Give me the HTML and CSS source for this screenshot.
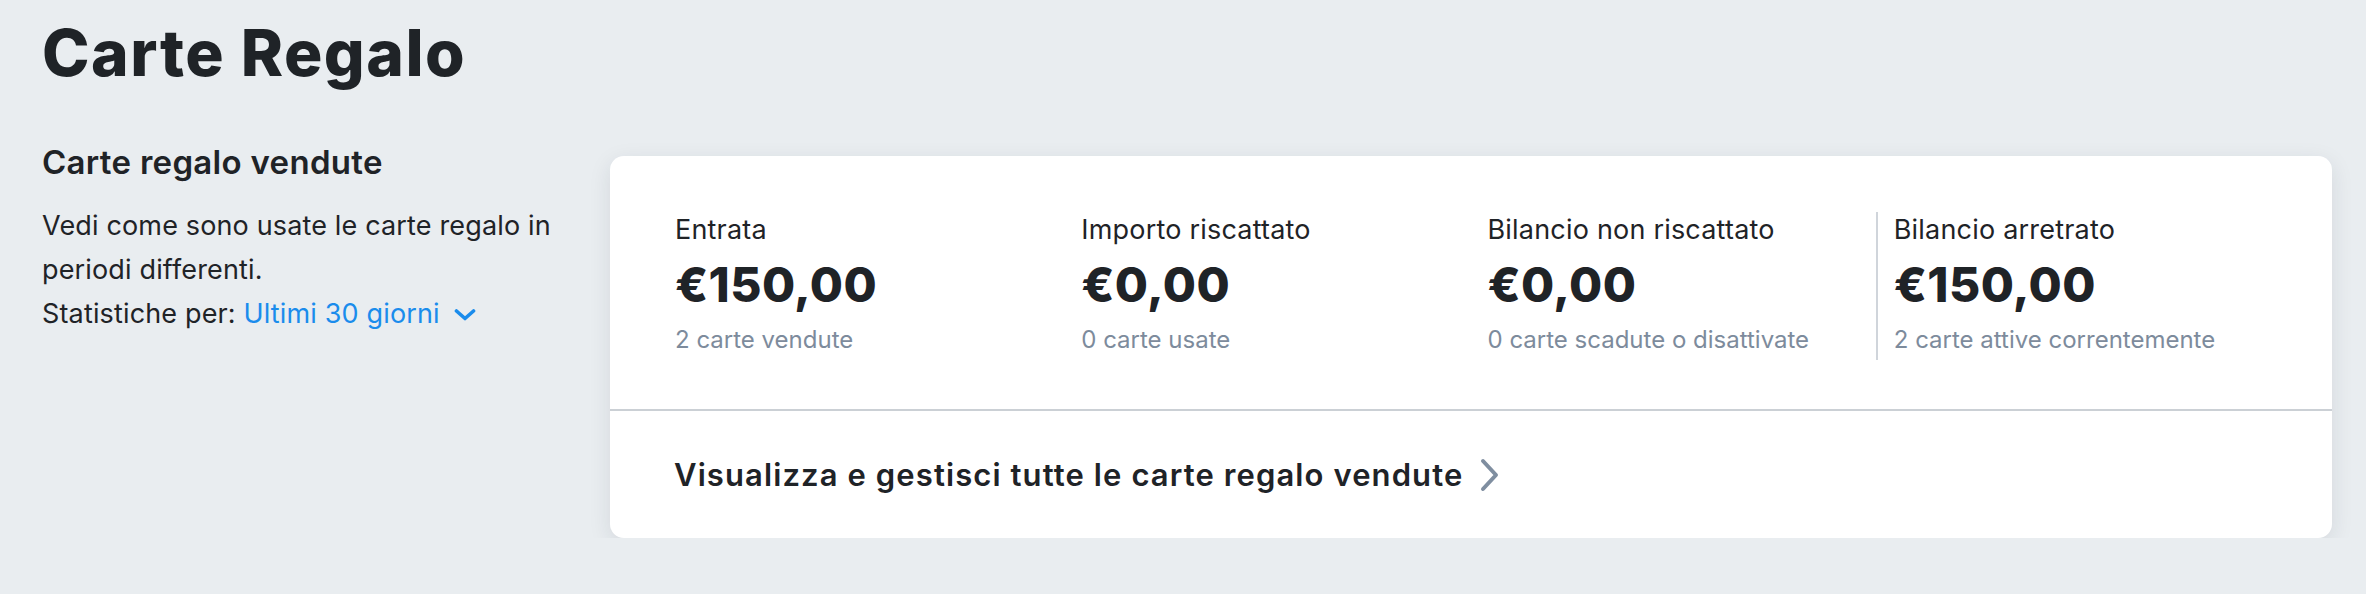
FILE: index.html
```html
<!DOCTYPE html>
<html lang="it">
<head>
    <meta charset="UTF-8">
    <meta name="viewport" content="width=device-width, initial-scale=1.0">
    <title>Carte Regalo</title>
    <link rel="stylesheet" href="styles.css">
</head>
<body>
    <div class="page">
        <h1>Carte Regalo</h1>

        <div class="section">
            <div class="intro">
                <h2>Carte regalo vendute</h2>
                <p>Vedi come sono usate le carte regalo in periodi differenti.</p>
                <div class="period">
                    Statistiche per:
                    <a href="#" class="period-link">Ultimi 30 giorni
                        <svg class="caret" width="22" height="12" viewBox="0 0 22 12">
                            <path d="M2.5 2 L11 9.5 L19.5 2" fill="none" stroke="currentColor" stroke-width="3.6" stroke-linecap="round" stroke-linejoin="round"/>
                        </svg>
                    </a>
                </div>
            </div>

            <div class="card">
                <div class="stats">
                    <div class="stat">
                        <div class="stat-label">Entrata</div>
                        <div class="stat-value">€150,00</div>
                        <div class="stat-note">2 carte vendute</div>
                    </div>
                    <div class="stat">
                        <div class="stat-label">Importo riscattato</div>
                        <div class="stat-value">€0,00</div>
                        <div class="stat-note">0 carte usate</div>
                    </div>
                    <div class="stat">
                        <div class="stat-label">Bilancio non riscattato</div>
                        <div class="stat-value">€0,00</div>
                        <div class="stat-note">0 carte scadute o disattivate</div>
                    </div>
                    <div class="stat stat-outstanding">
                        <div class="stat-label">Bilancio arretrato</div>
                        <div class="stat-value">€150,00</div>
                        <div class="stat-note">2 carte attive correntemente</div>
                    </div>
                </div>

                <a href="#" class="card-footer">
                    Visualizza e gestisci tutte le carte regalo vendute
                    <svg class="chevron" width="20" height="34" viewBox="0 0 20 34">
                        <path d="M3 3 L16 17 L3 31" fill="none" stroke="currentColor" stroke-width="4" stroke-linecap="round" stroke-linejoin="round"/>
                    </svg>
                </a>
            </div>
        </div>
    </div>
</body>
</html>
```

FILE: styles.css
```css
body {
    margin: 0;
    padding: 0;
    background-color: #e9edf0;
    color: #1f2327;
    font-family: Inter, "Noto Sans", sans-serif;
}
a {
    text-decoration: none;
}
.page {
    padding: 14px 34px 0 42px;
}
h1 {
    margin: 0;
    font-size: 64px;
    line-height: 77px;
    font-weight: 800;
    letter-spacing: 1.5px;
}
.section {
    display: flex;
    align-items: flex-start;
    gap: 48px;
    margin-top: 51px;
}
.intro {
    width: 520px;
    flex-shrink: 0;
}
h2 {
    margin: 0;
    font-size: 33px;
    line-height: 40px;
    font-weight: 600;
    letter-spacing: 0.3px;
}
.intro p {
    margin: 22px 0 0;
    font-size: 27px;
    line-height: 44px;
    letter-spacing: 0.15px;
}
.period {
    font-size: 27px;
    line-height: 44px;
    letter-spacing: 0.15px;
}
.period-link {
    color: #1a8cec;
}
.caret {
    margin-left: 6px;
    vertical-align: 2px;
}
.card {
    flex: 1;
    margin-top: 14px;
    background: #fff;
    border-radius: 14px;
    box-shadow: 0 6px 22px rgba(30, 40, 55, 0.1);
}
.stats {
    display: grid;
    grid-template-columns: repeat(4, 1fr);
    padding: 56px 50px 49px 47px;
    border-bottom: 2px solid #cbd0d5;
}
.stat {
    padding: 0 0 4px 18px;
}
.stat-outstanding {
    border-left: 2px solid #d0d5db;
    padding-left: 16px;
}
.stat-label {
    font-size: 27px;
    line-height: 36px;
    letter-spacing: 0.2px;
}
.stat-value {
    margin-top: 9px;
    font-size: 48px;
    line-height: 56px;
    font-weight: 800;
    letter-spacing: 0.4px;
}
.stat-note {
    margin-top: 11px;
    font-size: 24px;
    line-height: 32px;
    color: #7d8b9c;
}
.card-footer {
    display: flex;
    align-items: center;
    height: 127px;
    padding: 0 64px;
    font-size: 31px;
    font-weight: 600;
    letter-spacing: 1.1px;
    color: #1f2327;
}
.chevron {
    margin-left: 17px;
    color: #7f8ea0;
}
```
